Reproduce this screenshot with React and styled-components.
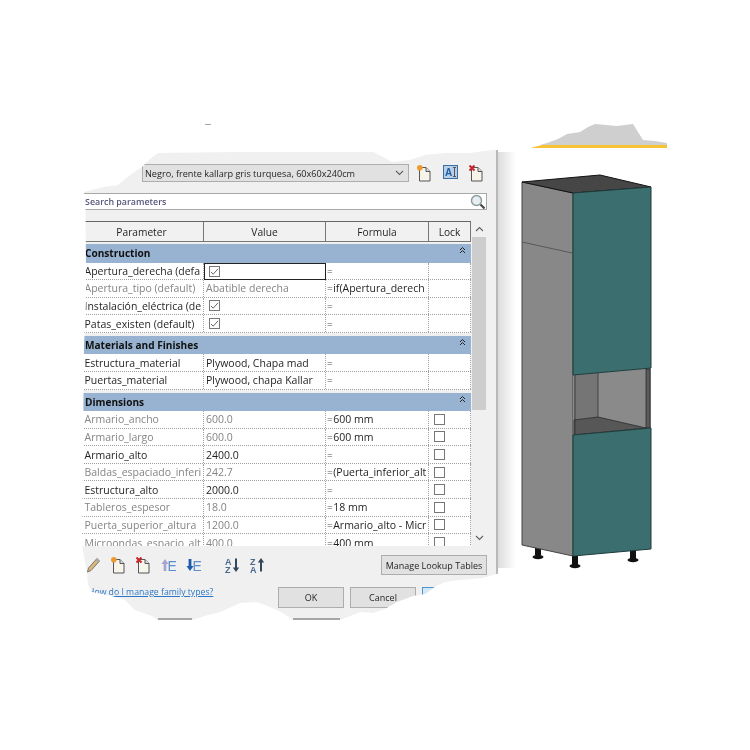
import React from 'react'
import styled, { createGlobalStyle } from 'styled-components'

const GlobalStyle = createGlobalStyle`
  html, body { margin: 0; padding: 0; background: #fff; }
  * { box-sizing: border-box; }
`

// torn paper outline, page coordinates
const tornEdge = [
  [84, 192], [92, 190], [104, 187], [118, 185], [124, 180], [130, 175], [142, 167], [150, 159], [158, 153],
  [240, 152], [320, 152], [373, 152], [385, 158], [392, 162], [410, 160], [425, 155], [445, 153], [470, 153], [500, 149],
  [500, 573], [483, 578], [460, 580], [445, 582], [436, 586], [425, 594], [413, 596], [397, 602], [385, 609],
  [373, 613], [360, 612], [340, 620], [293, 620], [283, 613], [270, 607], [257, 602], [240, 603], [220, 612],
  [208, 615], [192, 620], [158, 620], [152, 616], [135, 610], [125, 600], [112, 596], [92, 592], [88, 585], [87, 572],
  [82, 545], [83, 450], [84, 345], [86, 300], [86, 270], [85.5, 210],
].map(([x, y]) => `${x - 80}px ${y - 150}px`).join(', ')

const Page = styled.div`
  position: relative;
  display: flex;
  align-items: flex-start;
  width: 750px;
  height: 750px;
  padding: 124px 0 0 80px;
  background: #fff;
  overflow: hidden;
  font-family: "Open Sans", "Liberation Sans", sans-serif;
`

const Scrap = styled.span`
  position: absolute;
  left: 205px;
  top: 124px;
  width: 6px;
  height: 1px;
  background: #a8a8a8;
`

const Sheet = styled.div`
  position: relative;
  flex: none;
  width: 418px;
  height: 472px;
  margin-top: 26px;
  padding-top: 14px;
  background: #f0f0f0;
  border-right: 2px solid #b8b8b8;
  clip-path: polygon(${tornEdge});
  filter: blur(0.4px);
  color: #1f1f1f;
  font-size: 10.5px;
`

const Shadow = styled.div`
  flex: none;
  width: 18px;
  height: 416px;
  margin-top: 28px;
  background: linear-gradient(to right, #dcdcdc, #fff);
`

const TypeBar = styled.div`
  display: flex;
  align-items: center;
  height: 18px;
  padding-left: 62px;
`

const TypeSelect = styled.div`
  display: flex;
  align-items: center;
  justify-content: space-between;
  width: 267px;
  height: 18px;
  margin-right: 8px;
  padding: 0 4px 0 2px;
  background: #e1e1e1;
  border: 1px solid #adadad;
  font-size: 9.15px;
  white-space: nowrap;
`

const TypeIcons = styled.div`
  display: flex;
  gap: 11px;
`

const Search = styled.div`
  display: flex;
  align-items: center;
  justify-content: space-between;
  width: 407px;
  height: 17px;
  margin-top: 11px;
  padding: 0 0 0 4px;
  background: #fff;
  border: 1px solid #a8a8a8;
  color: #55557a;
  font-weight: 600;
  font-size: 8.9px;
`

const TableArea = styled.div`
  display: grid;
  grid-template-columns: 391px 16px;
  height: 325px;
  margin-top: 11px;
`

const TableMain = styled.div`
  overflow: hidden;
`

const columns = '124px 122px 103px 42px'

const HeaderRow = styled.div`
  display: grid;
  grid-template-columns: ${columns};
  height: 21px;
  border-top: 1px solid #666;
  border-bottom: 1px solid #777;
  background: #f1f1f1;
`

const HeaderCell = styled.div`
  display: flex;
  align-items: center;
  justify-content: center;
  border-right: 1px solid #777;
  font-size: 10.2px;
`

const GroupRow = styled.div`
  display: flex;
  align-items: flex-start;
  justify-content: space-between;
  height: 18.5px;
  margin-top: ${(p) => (p.$first ? '2px' : '3px')};
  padding: 2px 5px 0 5px;
  background: #98b3d1;
  color: #111;
  font-weight: 700;
  font-size: 10.1px;
`

const ParamRow = styled.div`
  display: grid;
  grid-template-columns: ${columns};
  height: 17.6px;
  background: #fff;
  border-bottom: 1px dotted #a0a0a0;
`

const Cell = styled.div`
  display: flex;
  align-items: center;
  padding-left: ${(p) => p.$pad || '2px'};
  overflow: hidden;
  white-space: nowrap;
  border-right: 1px dotted #a0a0a0;
  color: ${(p) => (p.$muted ? '#858585' : '#1f1f1f')};
  font-size: 10.5px;
  ${(p) => p.$selected && 'border: 1px solid #222; margin-bottom: -1px;'}
`

const Equals = styled.span`
  color: #555;
  font-size: 10px;
  margin-right: 0.5px;
`

const Check = styled.span`
  display: inline-flex;
  align-items: center;
  justify-content: center;
  flex: none;
  width: 11px;
  height: 11px;
  margin-left: ${(p) => p.$indent || '2.5px'};
  background: #fff;
  border: 1px solid #777;
`

const Scrollbar = styled.div`
  display: flex;
  flex-direction: column;
  align-items: center;
  background: #f0f0f0;
`

const ScrollArrow = styled.div`
  display: flex;
  align-items: center;
  justify-content: center;
  width: 100%;
  height: 16px;
`

const ScrollThumb = styled.div`
  width: 14px;
  height: 173px;
  background: #cdcdcd;
`

const ScrollTrack = styled.div`
  flex: 1;
`

const ToolRow = styled.div`
  display: flex;
  align-items: center;
  justify-content: space-between;
  width: 407px;
  height: 20px;
  margin-top: 9px;
  padding-left: 6px;
`

const ToolGroup = styled.div`
  display: flex;
  align-items: center;
  gap: ${(p) => p.$gap || '10px'};
`

const Tools = styled.div`
  display: flex;
  gap: 24px;
`

const Button = styled.div`
  display: flex;
  align-items: center;
  justify-content: center;
  height: ${(p) => p.$h || '21px'};
  width: ${(p) => p.$w || 'auto'};
  background: ${(p) => (p.$accent ? '#d5e6f5' : '#e1e1e1')};
  border: 1px solid ${(p) => (p.$accent ? '#4f95d6' : '#adadad')};
  color: #1f1f1f;
  font-size: 9px;
  white-space: nowrap;
`

const ActionRow = styled.div`
  display: grid;
  grid-template-columns: 184px 66px 66px 66px;
  gap: 6px;
  align-items: start;
  margin-top: 12px;
  padding-left: 8px;
`

const HelpLink = styled.a`
  margin-top: -1px;
  color: #2a76c6;
  font-size: 8.7px;
  text-decoration: underline;
  white-space: nowrap;
`

const TornBase = styled.span`
  position: absolute;
  top: 468px;
  left: ${(p) => p.$left};
  width: ${(p) => p.$width};
  height: 2px;
  background: #a6a6a6;
`

const Side = styled.div`
  display: flex;
  flex-direction: column;
  flex: none;
  filter: blur(0.3px);
`

const Ridge = styled.svg`
  display: block;
  width: 138px;
  height: 25px;
  margin-left: 14px;
`

const Cabinet = styled.svg`
  display: block;
  width: 140px;
  height: 400px;
  margin-top: 24px;
`

const DocIcon = ({ mark }) => (
  <svg width="15" height="17" viewBox="0 0 15 17">
    <path d="M2.5 2.5h6.5l4 4v9.5h-10.5z" fill="#f7f4e9" stroke="#555" />
    <path d="M9 2.5v4h4" fill="#ddd" stroke="#555" />
    {mark === 'new' && <circle cx="2.8" cy="2.8" r="2.8" fill="#ee9a2e" />}
    {mark === 'delete' && <path d="M0.5 0.5l5 5M5.5 0.5l-5 5" stroke="#c8232c" strokeWidth="2" />}
  </svg>
)

const RenameIcon = () => (
  <svg width="15" height="14" viewBox="0 0 15 14">
    <rect x="0.5" y="0.5" width="14" height="13" fill="#b9cfe6" stroke="#3a6ea5" />
    <text x="2" y="11" fontSize="10" fontWeight="700" fontFamily="Liberation Sans" fill="#1c5fa8">A</text>
    <path d="M11.5 2.5v9M10 2.5h3M10 11.5h3" stroke="#555" />
  </svg>
)

const MagnifierIcon = () => (
  <svg width="16" height="16" viewBox="0 0 16 16">
    <circle cx="6.5" cy="6.5" r="5" fill="#e6eef2" stroke="#8a9a9a" strokeWidth="1.4" />
    <path d="M10.5 10.5l4 4" stroke="#444" strokeWidth="2.2" />
  </svg>
)

const PencilIcon = () => (
  <svg width="15" height="16" viewBox="0 0 14 16">
    <path d="M10.5 1.5l2.5 2.5-8.5 9.5-3.5 1.5 1-4z" fill="#d9b777" stroke="#777" />
    <path d="M10.5 1.5l2.5 2.5-1.5 1.6-2.5-2.5z" fill="#aaa" />
  </svg>
)

const MoveIcon = ({ up }) => (
  <svg width="15" height="16" viewBox="0 0 15 16">
    <path
      d={up ? 'M4 2L0.5 7H2.6V14H5.4V7H7.5z' : 'M4 14L0.5 9H2.6V2H5.4V9H7.5z'}
      fill={up ? '#a9a3cf' : '#1f5aa8'}
    />
    <text x="6.5" y="14" fontSize="14" fontFamily="Liberation Sans" fill="#5b8fcf">E</text>
  </svg>
)

const SortIcon = ({ asc }) => (
  <svg width="15" height="16" viewBox="0 0 15 16">
    <text x="0" y="7.5" fontSize="9" fontWeight="700" fontFamily="Liberation Sans" fill="#4a6a8a">{asc ? 'A' : 'Z'}</text>
    <text x="0" y="15.5" fontSize="9" fontWeight="700" fontFamily="Liberation Sans" fill="#4a6a8a">{asc ? 'Z' : 'A'}</text>
    <path
      d={asc ? 'M11 15L7.8 10.5H10V1.5H12V10.5H14.2z' : 'M11 1L7.8 5.5H10V14.5H12V5.5H14.2z'}
      fill="#33475c"
    />
  </svg>
)

const Chevron = ({ up }) => (
  <svg width="9" height="6" viewBox="0 0 9 6">
    <path d={up ? 'M1 5l3.5-3.5L8 5' : 'M1 1l3.5 3.5L8 1'} fill="none" stroke="#606060" strokeWidth="1.1" />
  </svg>
)

const Collapse = () => (
  <svg width="7" height="8" viewBox="0 0 7 8">
    <path d="M1 4l2.5-2.5L6 4M1 7l2.5-2.5L6 7" fill="none" stroke="#222" strokeWidth="1" />
  </svg>
)

const Tick = () => (
  <svg width="9" height="9" viewBox="0 0 10 10">
    <path d="M1 5.5l2.5 2.5L9 2" fill="none" stroke="#555" strokeWidth="1" />
  </svg>
)

const sections = [
  {
    title: 'Construction',
    rows: [
      { name: 'Apertura_derecha (defa', check: true, selected: true },
      { name: 'Apertura_tipo (default)', value: 'Abatible derecha', formula: 'if(Apertura_derech', muted: true },
      { name: 'Instalación_eléctrica (de', check: true },
      { name: 'Patas_existen (default)', check: true },
    ],
  },
  {
    title: 'Materials and Finishes',
    rows: [
      { name: 'Estructura_material', value: 'Plywood, Chapa mad' },
      { name: 'Puertas_material', value: 'Plywood, chapa Kallar' },
    ],
  },
  {
    title: 'Dimensions',
    lock: true,
    rows: [
      { name: 'Armario_ancho', value: '600.0', formula: '600 mm', muted: true },
      { name: 'Armario_largo', value: '600.0', formula: '600 mm', muted: true },
      { name: 'Armario_alto', value: '2400.0' },
      { name: 'Baldas_espaciado_inferi', value: '242.7', formula: '(Puerta_inferior_alt', muted: true },
      { name: 'Estructura_alto', value: '2000.0' },
      { name: 'Tableros_espesor', value: '18.0', formula: '18 mm', muted: true },
      { name: 'Puerta_superior_altura', value: '1200.0', formula: 'Armario_alto - Micr', muted: true },
      { name: 'Microondas_espacio_alt', value: '400.0', formula: '400 mm', muted: true },
    ],
  },
]

const Row = ({ row, lock }) => (
  <ParamRow>
    <Cell $pad="4.5px" $muted={row.muted}>{row.name}</Cell>
    <Cell $muted={row.muted} $selected={row.selected}>
      {row.check ? <Check $indent={row.selected ? '1.5px' : '2.5px'}><Tick /></Check> : row.value}
    </Cell>
    <Cell $pad="1px"><Equals>=</Equals>{row.formula}</Cell>
    <Cell>{lock && <Check />}</Cell>
  </ParamRow>
)

const App = () => {
  return (
    <Page>
      <GlobalStyle />
      <Scrap />
      <Sheet>
        <TypeBar>
          <TypeSelect>
            Negro, frente kallarp gris turquesa, 60x60x240cm
            <Chevron />
          </TypeSelect>
          <TypeIcons>
            <DocIcon mark="new" />
            <RenameIcon />
            <DocIcon mark="delete" />
          </TypeIcons>
        </TypeBar>

        <Search>
          Search parameters
          <MagnifierIcon />
        </Search>

        <TableArea>
          <TableMain>
            <HeaderRow>
              <HeaderCell>Parameter</HeaderCell>
              <HeaderCell>Value</HeaderCell>
              <HeaderCell>Formula</HeaderCell>
              <HeaderCell>Lock</HeaderCell>
            </HeaderRow>
            {sections.map((section, i) => (
              <React.Fragment key={section.title}>
                <GroupRow $first={i === 0}>
                  {section.title}
                  <Collapse />
                </GroupRow>
                {section.rows.map((row) => (
                  <Row key={row.name} row={row} lock={section.lock} />
                ))}
              </React.Fragment>
            ))}
          </TableMain>
          <Scrollbar>
            <ScrollArrow><Chevron up /></ScrollArrow>
            <ScrollThumb />
            <ScrollTrack />
            <ScrollArrow><Chevron /></ScrollArrow>
          </Scrollbar>
        </TableArea>

        <ToolRow>
          <Tools>
            <ToolGroup>
              <PencilIcon />
              <DocIcon mark="new" />
              <DocIcon mark="delete" />
              <MoveIcon up />
              <MoveIcon />
            </ToolGroup>
            <ToolGroup>
              <SortIcon asc />
              <SortIcon />
            </ToolGroup>
          </Tools>
          <Button $w="106px" $h="20px">Manage Lookup Tables</Button>
        </ToolRow>

        <ActionRow>
          <HelpLink href="#">How do I manage family types?</HelpLink>
          <Button>OK</Button>
          <Button>Cancel</Button>
          <Button $accent />
        </ActionRow>

        <TornBase $left="78px" $width="34px" />
        <TornBase $left="213px" $width="47px" />
      </Sheet>
      <Shadow />
      <Side>
        <Ridge viewBox="530 124 138 25">
          <path
            d="M547 143L558 139L567 134L580 132L588 127L595 124L606 125L617 126L625 125L633 124L638 132L643 140L655 141L667 143V145H540z"
            fill="#cfcfcf"
          />
          <path d="M532 147.5L542 145H667V148H532z" fill="#f7c233" />
        </Ridge>
        <Cabinet viewBox="516 173 140 400">
          <rect x="535" y="546" width="6" height="9" fill="#111" />
          <ellipse cx="538" cy="557" rx="5.5" ry="2.2" fill="#111" />
          <rect x="630" y="550" width="6" height="9" fill="#111" />
          <ellipse cx="633" cy="560" rx="5.5" ry="2.2" fill="#111" />
          <rect x="572" y="556" width="6" height="9" fill="#111" />
          <ellipse cx="575" cy="566" rx="5.5" ry="2.2" fill="#111" />

          <path d="M522 182L573 193V556L522 545z" fill="#888" stroke="#444" strokeWidth="1" />
          <path d="M522 242L572 253" stroke="#444" strokeWidth="0.7" />
          <path d="M522 182L600 175L651 187L573 193z" fill="#464646" stroke="#111" strokeWidth="1" />

          <path d="M573 375L651 368V428L573 435z" fill="#8a8a8a" />
          <path d="M574 375L598 373V417L574 420z" fill="#757575" />
          <path d="M574 420L598 417L646 428L574 435z" fill="#575757" stroke="#222" strokeWidth="0.7" />
          <path d="M598 373V417" stroke="#333" strokeWidth="0.8" />
          <path d="M646 369H650V428H646z" fill="#5a5a5a" stroke="#222" strokeWidth="0.7" />
          <path d="M575 375V435" stroke="#333" strokeWidth="0.8" />

          <path d="M573 193L651 187V368L573 375z" fill="#3b6f6f" stroke="#1e3a3a" strokeWidth="1" />
          <path d="M573 435L651 428V549L573 556z" fill="#3b6f6f" stroke="#1e3a3a" strokeWidth="1" />
        </Cabinet>
      </Side>
    </Page>
  )
}

export default App
